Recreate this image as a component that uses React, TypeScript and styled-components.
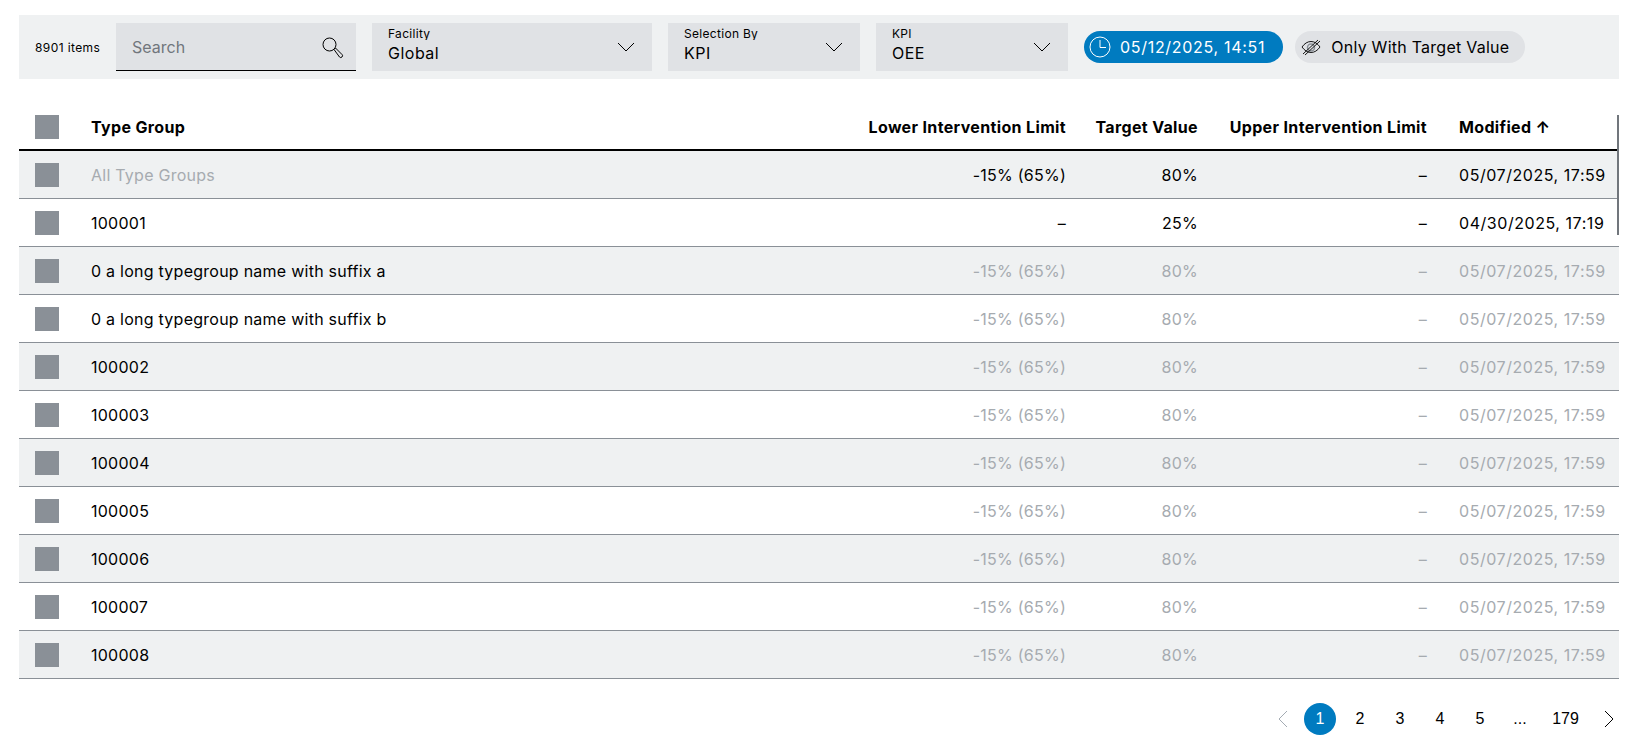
import { createGlobalStyle } from "styled-components";
import styled from "styled-components";

const GlobalStyle = createGlobalStyle`
	html, body {
		margin: 0;
		padding: 0;
		background: #fff;
		color: #000;
		font-family: "Inter", "Noto Sans", sans-serif;
	}
	* {
		box-sizing: border-box;
	}
`;

const Page = styled.div`
	padding: 15px 19px 0;
	width: 1638px;
	height: 752px;
	overflow: hidden;
`;

const Toolbar = styled.div`
	display: flex;
	align-items: center;
	height: 64px;
	padding: 0 16px;
	background: #eff1f2;
`;

const Count = styled.span`
	font-size: 12px;
	letter-spacing: 0.4px;
	width: 81px;
	flex: none;
`;

const SearchBox = styled.div`
	display: flex;
	align-items: center;
	justify-content: space-between;
	width: 240px;
	height: 48px;
	padding: 0 12px 0 16px;
	background: #e0e2e5;
	border-bottom: 1px solid #000;
	margin-right: 16px;
	flex: none;
`;

const Placeholder = styled.span`
	font-size: 16px;
	color: #71767c;
`;

const Select = styled.div<{ $width: number }>`
	display: flex;
	align-items: center;
	justify-content: space-between;
	width: ${(props) => props.$width}px;
	height: 48px;
	padding: 0 14px 0 16px;
	background: #e0e2e5;
	margin-right: 16px;
	flex: none;
`;

const SelectText = styled.div`
	display: flex;
	flex-direction: column;
	gap: 2px;
	margin-top: -4px;
`;

const SelectLabel = styled.span`
	font-size: 12px;
	line-height: 15px;
	height: 14px;
	overflow: hidden;
	letter-spacing: 0.3px;
`;

const SelectValue = styled.span`
	font-size: 16px;
	line-height: 22px;
	letter-spacing: 0.5px;
`;

const Pill = styled.div<{ $active?: boolean }>`
	display: flex;
	align-items: center;
	gap: 8px;
	height: 32px;
	padding: 0 ${(props) => (props.$active ? "18px" : "16px")} 0 4px;
	border-radius: 16px;
	font-size: 16px;
	letter-spacing: ${(props) => (props.$active ? "0.7px" : "0.25px")};
	background: ${(props) => (props.$active ? "#007bc0" : "#e0e2e5")};
	color: ${(props) => (props.$active ? "#fff" : "#000")};
	margin-right: 12px;
	flex: none;
`;

const Table = styled.div`
	position: relative;
	margin-top: 24px;
`;

const Scrollbar = styled.div`
	position: absolute;
	right: 0;
	top: 12px;
	width: 2px;
	height: 120px;
	background: #71767c;
`;

const Row = styled.div<{ $shaded?: boolean; $head?: boolean }>`
	display: grid;
	grid-template-columns: 72px 1fr 230px 132px 229px 176px;
	align-items: center;
	height: 48px;
	padding-top: ${(props) => (props.$head ? "2px" : "0")};
	background: ${(props) => (props.$shaded ? "#eff1f2" : "#fff")};
	border-bottom: ${(props) => (props.$head ? "2px solid #000" : "1px solid #8a9097")};
	font-weight: ${(props) => (props.$head ? 700 : 400)};
	letter-spacing: ${(props) => (props.$head ? "0.35px" : "0.25px")};
`;

const CheckBox = styled.div`
	width: 24px;
	height: 24px;
	margin-left: 16px;
	background: #8a9097;
`;

const Cell = styled.div<{ $muted?: boolean }>`
	padding: 0 16px;
	font-size: 16px;
	white-space: nowrap;
	color: ${(props) => (props.$muted ? "#a6abb0" : "#000")};
`;

const NameCell = styled(Cell)`
	padding-left: 0;
`;

const NumberCell = styled(Cell)`
	padding-left: 0;
	text-align: right;
`;

const ModifiedCell = styled(Cell)`
	padding-right: 0;
`;

const DateCell = styled(ModifiedCell)`
	letter-spacing: 0.55px;
`;

const Pager = styled.div`
	display: flex;
	justify-content: flex-end;
	align-items: center;
	margin-top: 24px;
	margin-right: -1px;
	height: 32px;
`;

const PageButton = styled.div<{ $current?: boolean; $wide?: boolean }>`
	display: flex;
	align-items: center;
	justify-content: center;
	width: ${(props) => (props.$wide ? "43px" : "32px")};
	height: 32px;
	margin-right: ${(props) => (props.$wide ? "0" : "8px")};
	border-radius: 50%;
	font-size: 16px;
	font-family: "Liberation Sans", sans-serif;
	background: ${(props) => (props.$current ? "#007bc0" : "transparent")};
	color: ${(props) => (props.$current ? "#fff" : "#000")};
`;

const PrevArrow = styled.svg`
	flex: none;
	width: 24px;
	height: 24px;
	margin-right: 8px;
`;

const NextArrow = styled.svg`
	flex: none;
	width: 24px;
	height: 24px;
	margin-left: 9px;
`;

function Chevron() {
	return (
		<svg width="24" height="24" viewBox="0 0 24 24" fill="none" stroke="#000" strokeWidth="1">
			<path d="M4 8l8 8 8-8" />
		</svg>
	);
}

function SearchIcon() {
	return (
		<svg width="24" height="24" viewBox="0 0 24 24" fill="none" stroke="#000" strokeWidth="1">
			<circle cx="9.5" cy="9.5" r="6.500" />
			<path d="M14 14.500l1.500-1.500 6.500 6.500a1.500 1.500 0 0 1-2.500 2.500z" />
		</svg>
	);
}

function ClockIcon() {
	return (
		<svg width="24" height="24" viewBox="0 0 24 24" fill="none" stroke="#fff" strokeWidth="1">
			<circle cx="12" cy="12" r="10" />
			<path d="M12 5v7.500h6" />
		</svg>
	);
}

function EyeOffIcon() {
	return (
		<svg width="24" height="24" viewBox="0 0 24 24" fill="none" stroke="#000" strokeWidth="0.9">
			<path d="M3 12c2.500-3.500 5.500-5.500 9-5.500s6.500 2 9 5.500c-2.500 3.500-5.500 5.500-9 5.500s-6.500-2-9-5.500z" />
			<circle cx="12" cy="12.500" r="3.500" stroke="#8a9097" strokeWidth="1.500" />
			<path d="M4 19L19 5M6 20L21 6" />
		</svg>
	);
}

const rows = [
	"0 a long typegroup name with suffix a",
	"0 a long typegroup name with suffix b",
	"100002",
	"100003",
	"100004",
	"100005",
	"100006",
	"100007",
	"100008",
];

function App() {
	return (
		<Page>
			<GlobalStyle />
			<Toolbar>
				<Count>8901 items</Count>
				<SearchBox>
					<Placeholder>Search</Placeholder>
					<SearchIcon />
				</SearchBox>
				<Select $width={280}>
					<SelectText>
						<SelectLabel>Facility</SelectLabel>
						<SelectValue>Global</SelectValue>
					</SelectText>
					<Chevron />
				</Select>
				<Select $width={192}>
					<SelectText>
						<SelectLabel>Selection By</SelectLabel>
						<SelectValue>KPI</SelectValue>
					</SelectText>
					<Chevron />
				</Select>
				<Select $width={192}>
					<SelectText>
						<SelectLabel>KPI</SelectLabel>
						<SelectValue>OEE</SelectValue>
					</SelectText>
					<Chevron />
				</Select>
				<Pill $active>
					<ClockIcon />
					05/12/2025, 14:51
				</Pill>
				<Pill>
					<EyeOffIcon />
					Only With Target Value
				</Pill>
			</Toolbar>
			<Table>
				<Scrollbar />
				<Row $head>
					<CheckBox />
					<NameCell>Type Group</NameCell>
					<NumberCell>Lower Intervention Limit</NumberCell>
					<NumberCell>Target Value</NumberCell>
					<NumberCell>Upper Intervention Limit</NumberCell>
					<ModifiedCell>Modified ↑</ModifiedCell>
				</Row>
				<Row $shaded>
					<CheckBox />
					<NameCell $muted>All Type Groups</NameCell>
					<NumberCell>-15% (65%)</NumberCell>
					<NumberCell>80%</NumberCell>
					<NumberCell>–</NumberCell>
					<DateCell>05/07/2025, 17:59</DateCell>
				</Row>
				<Row>
					<CheckBox />
					<NameCell>100001</NameCell>
					<NumberCell>–</NumberCell>
					<NumberCell>25%</NumberCell>
					<NumberCell>–</NumberCell>
					<DateCell>04/30/2025, 17:19</DateCell>
				</Row>
				{rows.map((name, i) => (
					<Row key={name} $shaded={i % 2 === 0}>
						<CheckBox />
						<NameCell>{name}</NameCell>
						<NumberCell $muted>-15% (65%)</NumberCell>
						<NumberCell $muted>80%</NumberCell>
						<NumberCell $muted>–</NumberCell>
						<DateCell $muted>05/07/2025, 17:59</DateCell>
					</Row>
				))}
			</Table>
			<Pager>
				<PrevArrow viewBox="0 0 24 24" fill="none" stroke="#a4abb3" strokeWidth="1">
					<path d="M15 4l-8 8 8 8" />
				</PrevArrow>
				<PageButton $current>1</PageButton>
				<PageButton>2</PageButton>
				<PageButton>3</PageButton>
				<PageButton>4</PageButton>
				<PageButton>5</PageButton>
				<PageButton>...</PageButton>
				<PageButton $wide>179</PageButton>
				<NextArrow viewBox="0 0 24 24" fill="none" stroke="#000" strokeWidth="1">
					<path d="M9 4l8 8-8 8" />
				</NextArrow>
			</Pager>
		</Page>
	);
}

export default App;
